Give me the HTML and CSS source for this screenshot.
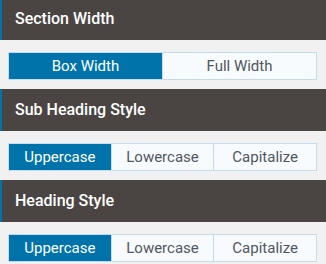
FILE: index.html
```html
<!DOCTYPE html>
<html lang="en">
<head>
  <meta charset="UTF-8" />
  <meta name="viewport" content="width=device-width, initial-scale=1.0">
  <title>Typography Options</title>
  <link rel="stylesheet" href="styles.css">
</head>

<body>
  <div class="panel">
    <div class="seccion">
      <h3 class="titulo">Section Width</h3>
      <div class="opciones">
        <div class="grupo">
          <button class="btn activo">Box Width</button>
          <button class="btn">Full Width</button>
        </div>
      </div>
    </div>

    <div class="seccion">
      <h3 class="titulo">Sub Heading Style</h3>
      <div class="opciones">
        <div class="grupo">
          <button class="btn activo">Uppercase</button>
          <button class="btn">Lowercase</button>
          <button class="btn">Capitalize</button>
        </div>
      </div>
    </div>

    <div class="seccion">
      <h3 class="titulo">Heading Style</h3>
      <div class="opciones">
        <div class="grupo">
          <button class="btn activo">Uppercase</button>
          <button class="btn">Lowercase</button>
          <button class="btn">Capitalize</button>
        </div>
      </div>
    </div>
  </div>
</body>
</html>
```

FILE: styles.css
```css
body {
  margin: 0;
  padding: 0;
  background-color: #f1f1f1;
  font-family: Roboto, 'Liberation Sans', sans-serif;
}

.panel {
  margin-top: -2px;
}

.titulo {
  margin: 0;
  height: 42px;
  line-height: 42px;
  padding-left: 13px;
  background-color: #4a4543;
  border-left: 2px solid #0073aa;
  color: #fff;
  font-size: 16px;
  font-weight: 500;
}

.opciones {
  padding: 12px 9px 9px 8px;
}

.grupo {
  display: flex;
  border: 1px solid #c5dcee;
  background-color: #f8fbfe;
}

.btn {
  flex: 1;
  height: 26px;
  margin: 0;
  padding: 0;
  border: none;
  border-left: 1px solid #c5dcee;
  background-color: #f8fbfe;
  color: #50575e;
  font-family: inherit;
  font-size: 15px;
}

.btn:first-child {
  border-left: none;
}

.btn.activo {
  background-color: #0073aa;
  color: #fff;
}
```
